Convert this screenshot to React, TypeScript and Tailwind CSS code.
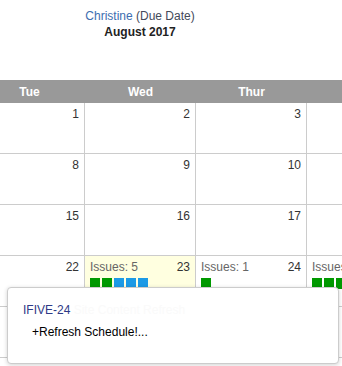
import React from 'react';

type Cell = {
  day?: number;
  issues?: number;
  squares?: string[];
  today?: boolean;
};

const GREEN = 'bg-[#009900]';
const BLUE = 'bg-[#1c9ae6]';

const rows: Cell[][] = [
  [{ day: 1 }, { day: 2 }, { day: 3 }, {}],
  [{ day: 8 }, { day: 9 }, { day: 10 }, {}],
  [{ day: 15 }, { day: 16 }, { day: 17 }, {}],
  [
    { day: 22 },
    { day: 23, issues: 5, today: true, squares: [GREEN, GREEN, BLUE, BLUE, BLUE] },
    { day: 24, issues: 1, squares: [GREEN] },
    { day: 25, issues: 3, squares: [GREEN, GREEN, GREEN] },
  ],
  [{ day: 29 }, { day: 30 }, { day: 31 }, {}],
];

const days = ['Tue', 'Wed', 'Thur', ''];

function DayCell({ cell }: { cell: Cell }) {
  return (
    <div
      className={`w-[111px] shrink-0 h-full border-r border-[#cccccc] pt-[3px] px-[5px] ${
        cell.today ? 'bg-[#ffffe0]' : 'bg-white'
      }`}
    >
      <div className="flex items-start justify-between leading-[16px]">
        {cell.issues !== undefined ? (
          <span className="text-[#666666] whitespace-nowrap">Issues: {cell.issues}</span>
        ) : (
          <span />
        )}
        {cell.day !== undefined && <span className="text-[#333333]">{cell.day}</span>}
      </div>
      {cell.squares && (
        <div className="flex gap-[2px] mt-[3px]">
          {cell.squares.map((c, i) => (
            <div key={i} className={`w-[10px] h-[11px] ${c}`} />
          ))}
        </div>
      )}
    </div>
  );
}

export default function App() {
  return (
    <div
      className="relative w-[342px] h-[366px] overflow-hidden bg-white text-[12px]"
      style={{ fontFamily: '"Liberation Sans", Arial, sans-serif' }}
    >
      <div className="w-[280px] pt-2 text-center leading-[16px]">
        <div>
          <span className="text-[#3d6eb0]">Christine</span>{' '}
          <span className="text-[#444a5a]">(Due Date)</span>
        </div>
        <div className="font-bold text-[#222222]">August 2017</div>
      </div>

      <div className="mt-[40px] ml-[-26px]">
        <div className="flex h-[23px] bg-[#999999] w-[444px]">
          {days.map((d, i) => (
            <div key={i} className="w-[111px] shrink-0 flex items-center justify-center font-bold text-white">
              {d}
            </div>
          ))}
        </div>
        {rows.map((r, i) => (
          <div key={i} className="flex h-[51px] border-b border-[#cccccc] w-[444px]">
            {r.map((c, j) => (
              <DayCell key={j} cell={c} />
            ))}
          </div>
        ))}
      </div>

      <div className="absolute left-[7px] top-[287px] w-[332px] h-[77px] bg-white border border-[#cccccc] rounded-[4px] shadow-[0_1px_4px_rgba(0,0,0,0.18)] pt-[14px] pl-[15px] leading-[16px]">
        <div className="whitespace-nowrap">
          <span className="text-[#2e3a86]">IFIVE-24</span>{' '}
          <span className="text-[#fafafa]">Site Content Refresh</span>
        </div>
        <div className="mt-[6px] pl-[9px] text-black">+Refresh Schedule!...</div>
      </div>
    </div>
  );
}
